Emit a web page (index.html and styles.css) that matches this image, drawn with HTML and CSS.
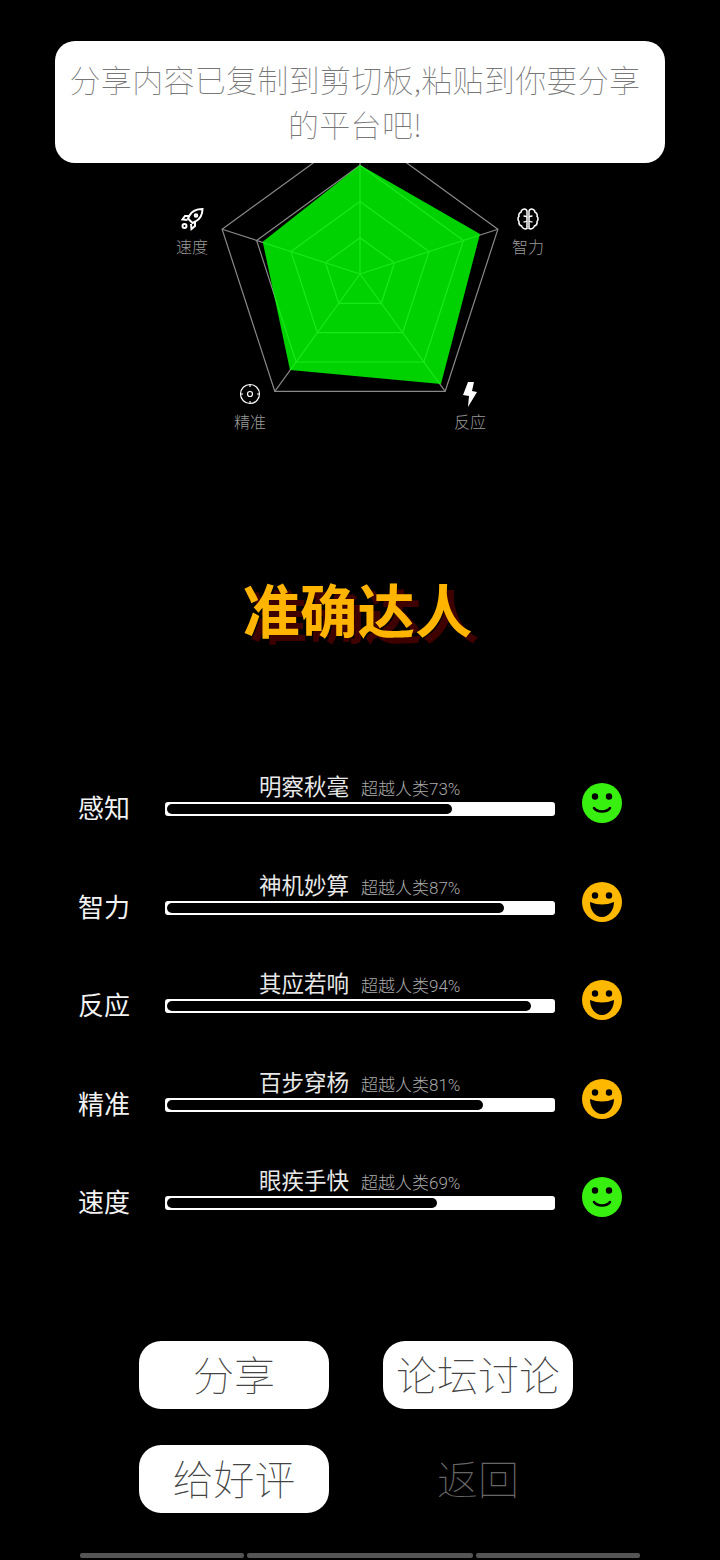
FILE: index.html
```html
<!DOCTYPE html>
<html lang="zh-CN">
  <head>
    <meta charset="UTF-8" />
    <meta name="viewport" content="width=device-width, initial-scale=1.0" />
    <title>准确达人</title>
    <link rel="stylesheet" href="styles.css">
  </head>
  <body>
    <div class="toast">分享内容已复制到剪切板,粘贴到你要分享的平台吧!</div>

    <div class="radar">
      <svg class="radar-chart" viewBox="0 0 720 470" width="720" height="470">
        <g class="radar-grid">
          <polygon points="360,129 497.9,229.2 445.2,391.3 274.8,391.3 222.1,229.2" />
          <polygon points="360,165.25 463.4,240.4 423.9,362 296.1,362 256.6,240.4" />
          <polygon points="360,201.5 429,251.6 402.6,332.7 317.4,332.7 291,251.6" />
          <polygon points="360,237.75 394.5,262.8 381.3,303.3 338.7,303.3 325.5,262.8" />
          <path d="M360 274V129M360 274L497.9 229.2M360 274L445.2 391.3M360 274L274.8 391.3M360 274L222.1 229.2" />
        </g>
        <polygon class="radar-value" points="360,165 480,234 441,384 290,370 262.7,241.7" />
      </svg>

      <div class="axis axis-speed">
        <svg class="axis-icon icon-bold" viewBox="0 0 24 24">
          <path d="M22.500 2c-5.500 0-10.500 2-13 6.500L8 11.500l4.500 4.500 3-1.500c4.500-2.500 7-7.500 7-12.500z" />
          <circle cx="16" cy="8.500" r="1.300" />
          <path d="M9 9H5L2.500 12.500l5 .5M15 15v4L11.500 22l-.5-5" />
          <circle cx="4.500" cy="19" r="2" />
        </svg>
        <span>速度</span>
      </div>
      <div class="axis axis-smart">
        <svg class="axis-icon icon-brain" viewBox="0 0 24 24">
          <path d="M11 4C10.500 2.500 8.500 1.500 6.800 2.500 5.500 3 5 4 5 5.200 3.300 5.800 2.500 7.500 3 9.300 1.800 10.800 1.800 13 3 14.600 2.600 16.800 3.800 18.500 5.700 19 6 21 8.500 22.700 11 21.500z" />
          <path d="M13 4C13.500 2.500 15.500 1.500 17.200 2.500 18.500 3 19 4 19 5.200 20.700 5.800 21.500 7.500 21 9.300 22.200 10.800 22.200 13 21 14.600 21.400 16.800 20.200 18.500 18.300 19 18 21 15.500 22.700 13 21.500z" />
          <path d="M7.500 9c1.300 0 2.500.3 3.500 1M7.500 15c1.300 0 2.500-.3 3.500-1M16.500 9c-1.300 0-2.500.3-3.500 1M16.500 15c-1.300 0-2.500-.3-3.500-1" />
        </svg>
        <span>智力</span>
      </div>
      <div class="axis axis-accuracy">
        <svg class="axis-icon" viewBox="0 0 24 24">
          <circle cx="12" cy="12" r="9.500" />
          <circle cx="12" cy="12" r="2.500" />
          <path d="M12 2.500v2.500M12 19v2.500M2.500 12H5M19 12h2.500" />
        </svg>
        <span>精准</span>
      </div>
      <div class="axis axis-react">
        <svg class="axis-bolt" viewBox="0 0 24 28">
          <polygon points="10,1 16,1 14,10 19,11 10,26 11,15 5,14" />
        </svg>
        <span>反应</span>
      </div>
    </div>

    <h1 class="rank-title">准确达人</h1>

    <div class="stats">
      <div class="stat-row">
        <div class="stat-label">感知</div>
        <div class="stat-main">
          <div class="stat-head"><span class="stat-name">明察秋毫</span><span class="stat-note">超越人类73%</span></div>
          <div class="stat-bar"><div class="stat-fill" style="width: 285px"></div></div>
        </div>
        <svg class="face face-good" viewBox="0 0 40 40">
          <circle cx="20" cy="20" r="20" />
          <circle class="face-eye" cx="13" cy="13.500" r="3.200" />
          <circle class="face-eye" cx="27" cy="13.500" r="3.200" />
          <path class="face-smile" d="M12 25c3 4.500 13 4.500 16 0" />
        </svg>
      </div>
      <div class="stat-row">
        <div class="stat-label">智力</div>
        <div class="stat-main">
          <div class="stat-head"><span class="stat-name">神机妙算</span><span class="stat-note">超越人类87%</span></div>
          <div class="stat-bar"><div class="stat-fill" style="width: 337px"></div></div>
        </div>
        <svg class="face face-great" viewBox="0 0 40 40">
          <circle cx="20" cy="20" r="20" />
          <circle class="face-eye" cx="13" cy="13.500" r="3.200" />
          <circle class="face-eye" cx="27" cy="13.500" r="3.200" />
          <path class="face-eye" d="M8 20Q20 25 32 20C32 28 27 35 20 35S8 28 8 20z" />
        </svg>
      </div>
      <div class="stat-row">
        <div class="stat-label">反应</div>
        <div class="stat-main">
          <div class="stat-head"><span class="stat-name">其应若响</span><span class="stat-note">超越人类94%</span></div>
          <div class="stat-bar"><div class="stat-fill" style="width: 364px"></div></div>
        </div>
        <svg class="face face-great" viewBox="0 0 40 40">
          <circle cx="20" cy="20" r="20" />
          <circle class="face-eye" cx="13" cy="13.500" r="3.200" />
          <circle class="face-eye" cx="27" cy="13.500" r="3.200" />
          <path class="face-eye" d="M8 20Q20 25 32 20C32 28 27 35 20 35S8 28 8 20z" />
        </svg>
      </div>
      <div class="stat-row">
        <div class="stat-label">精准</div>
        <div class="stat-main">
          <div class="stat-head"><span class="stat-name">百步穿杨</span><span class="stat-note">超越人类81%</span></div>
          <div class="stat-bar"><div class="stat-fill" style="width: 316px"></div></div>
        </div>
        <svg class="face face-great" viewBox="0 0 40 40">
          <circle cx="20" cy="20" r="20" />
          <circle class="face-eye" cx="13" cy="13.500" r="3.200" />
          <circle class="face-eye" cx="27" cy="13.500" r="3.200" />
          <path class="face-eye" d="M8 20Q20 25 32 20C32 28 27 35 20 35S8 28 8 20z" />
        </svg>
      </div>
      <div class="stat-row">
        <div class="stat-label">速度</div>
        <div class="stat-main">
          <div class="stat-head"><span class="stat-name">眼疾手快</span><span class="stat-note">超越人类69%</span></div>
          <div class="stat-bar"><div class="stat-fill" style="width: 270px"></div></div>
        </div>
        <svg class="face face-good" viewBox="0 0 40 40">
          <circle cx="20" cy="20" r="20" />
          <circle class="face-eye" cx="13" cy="13.500" r="3.200" />
          <circle class="face-eye" cx="27" cy="13.500" r="3.200" />
          <path class="face-smile" d="M12 25c3 4.500 13 4.500 16 0" />
        </svg>
      </div>
    </div>

    <div class="actions">
      <button class="action-button">分享</button>
      <button class="action-button">论坛讨论</button>
      <button class="action-button">给好评</button>
      <button class="action-button back">返回</button>
    </div>

    <div class="nav-strip">
      <div class="nav-seg seg-side"></div>
      <div class="nav-seg seg-mid"></div>
      <div class="nav-seg seg-side"></div>
    </div>
  </body>
</html>
```

FILE: styles.css
```css
html {
  background-color: #000;
}
body {
  position: relative;
  width: 720px;
  height: 1560px;
  margin: 0;
  overflow: hidden;
  background-color: #000;
  font-family: "Noto Sans CJK SC", "Noto Sans", sans-serif;
  font-weight: 300;
}
.toast {
  position: absolute;
  z-index: 2;
  top: 41px;
  left: 55px;
  box-sizing: border-box;
  width: 610px;
  height: 122px;
  padding: 15px 22px 0 12px;
  border-radius: 20px;
  background-color: #fff;
  color: #777;
  font-size: 31px;
  font-weight: 100;
  letter-spacing: 0.3px;
  line-height: 45px;
  text-align: center;
}
.radar {
  position: relative;
  height: 470px;
}
.radar-chart {
  display: block;
}
.radar-grid polygon,
.radar-grid path {
  fill: none;
  stroke: #888;
  stroke-width: 1.2;
}
.radar-value {
  fill: #00ff00;
  opacity: 0.82;
}
.axis {
  position: absolute;
  width: 60px;
  display: flex;
  flex-direction: column;
  align-items: center;
  color: #999;
  font-size: 16px;
  line-height: 24px;
}
.axis-speed {
  left: 162px;
  top: 207px;
}
.axis-smart {
  left: 498px;
  top: 207px;
}
.axis-accuracy {
  left: 220px;
  top: 382px;
}
.axis-react {
  left: 440px;
  top: 381px;
}
.axis-icon {
  width: 24px;
  height: 24px;
  fill: none;
  stroke: #fff;
  stroke-width: 1.2;
  margin-bottom: 3px;
}
.icon-bold {
  stroke-width: 2;
}
.icon-brain {
  stroke-width: 1.5;
}
.axis-bolt {
  width: 24px;
  height: 28px;
  fill: #fff;
}
.rank-title {
  margin: 98px 0 124px;
  padding-right: 5px;
  color: #ffb400;
  font-size: 57.500px;
  font-weight: 700;
  line-height: 80px;
  text-align: center;
  text-shadow: 7px 6px 0 #3f0000;
}
.stats {
  display: flex;
  flex-direction: column;
  gap: 54.6px;
  padding-left: 78px;
}
.stat-row {
  display: flex;
  align-items: flex-start;
  height: 44px;
}
.stat-label {
  width: 87px;
  padding-top: 17px;
  color: #f2f2f2;
  font-size: 26px;
  font-weight: 400;
  line-height: 36px;
}
.stat-main {
  width: 390px;
}
.stat-head {
  display: flex;
  height: 30px;
  margin-top: -2px;
  margin-bottom: 2px;
  padding-left: 94px;
  align-items: center;
  gap: 12px;
}
.stat-name {
  color: #e8e8e8;
  font-size: 22.500px;
  font-weight: 400;
}
.stat-note {
  color: #aaa;
  font-family: Roboto, "Noto Sans CJK SC", sans-serif;
  font-size: 17px;
  padding-top: 5px;
}
.stat-bar {
  box-sizing: border-box;
  height: 14px;
  padding: 2px;
  border-radius: 3px;
  background-color: #fff;
}
.stat-fill {
  height: 10px;
  border-radius: 5px;
  background-color: #000;
}
.face {
  width: 40px;
  height: 40px;
  margin: 11px 0 0 27px;
}
.face-good circle:first-child {
  fill: #38f010;
}
.face-great circle:first-child {
  fill: #ffb800;
}
.face .face-eye {
  fill: #000;
}
.face-smile {
  fill: none;
  stroke: #000;
  stroke-width: 2.500;
  stroke-linecap: round;
}
.actions {
  display: grid;
  grid-template-columns: 190px 190px;
  grid-auto-rows: 68px;
  column-gap: 54px;
  row-gap: 36px;
  margin-top: 130.600px;
  padding-left: 139px;
}
.action-button {
  padding: 0 0 3px;
  border: none;
  border-radius: 22px;
  background-color: #fff;
  color: #444;
  font-family: inherit;
  font-size: 41px;
  font-weight: 100;
  line-height: 65px;
  white-space: nowrap;
}
.action-button.back {
  background-color: transparent;
  color: #666;
}
.nav-strip {
  display: flex;
  gap: 3px;
  margin: 40px 0 0 80px;
}
.nav-seg {
  height: 5px;
  border-radius: 2px;
  background-color: #555;
}
.seg-side {
  width: 164px;
}
.seg-mid {
  width: 226px;
}
```
